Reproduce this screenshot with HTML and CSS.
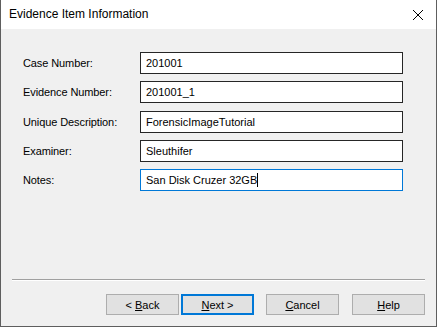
FILE: index.html
```html
<!DOCTYPE html>
<html lang="en">
<head>
    <meta charset="UTF-8">
    <title>Evidence Item Information</title>
    <link rel="stylesheet" href="styles.css">
</head>
<body>
    <div class="dialog">
        <div class="titlebar">
            <span class="title">Evidence Item Information</span>
            <svg class="close" width="12" height="12" viewBox="0 0 12 12">
                <path d="M1 1 L11 11 M11 1 L1 11" stroke="#000" stroke-width="1" fill="none"/>
            </svg>
        </div>

        <div class="form">
            <label>Case Number:</label>
            <div class="field">201001</div>
            <label>Evidence Number:</label>
            <div class="field">201001_1</div>
            <label>Unique Description:</label>
            <div class="field">ForensicImageTutorial</div>
            <label>Examiner:</label>
            <div class="field">Sleuthifer</div>
            <label>Notes:</label>
            <div class="field focused">San Disk Cruzer 32GB<span class="caret"></span></div>
        </div>

        <div class="separator"></div>

        <div class="buttons">
            <button class="btn">&lt; <u>B</u>ack</button>
            <button class="btn default"><u>N</u>ext &gt;</button>
            <button class="btn cancel"><u>C</u>ancel</button>
            <button class="btn help"><u>H</u>elp</button>
        </div>
    </div>
</body>
</html>
```

FILE: styles.css
```css
body {
    margin: 0;
    background: #fff;
    font-family: "Liberation Sans", Arial, sans-serif;
    font-size: 11px;
    color: #000;
}
.dialog {
    width: 435px;
    height: 326px;
    border: 1px solid #5e5e5e;
    border-top: none;
    background: #f0f0f0;
    display: flex;
    flex-direction: column;
}
.titlebar {
    height: 29px;
    background: #fff;
    display: flex;
    align-items: center;
    justify-content: space-between;
    padding: 0 12px 0 8px;
    flex-shrink: 0;
}
.title {
    font-size: 12px;
    color: #000;
    margin-top: -1px;
}
.close {
    display: block;
}
.form {
    flex: 1;
    display: grid;
    grid-template-columns: 117px 263px;
    grid-auto-rows: 22px;
    row-gap: 7.25px;
    padding: 23px 0 0 22px;
    align-items: center;
}
.form label {
    letter-spacing: -0.1px;
}
.field {
    height: 20px;
    line-height: 20px;
    border: 1px solid #262626;
    background: #fff;
    padding-left: 5px;
    white-space: nowrap;
}
.field.focused {
    border-color: #0078d7;
}
.caret {
    display: inline-block;
    width: 1px;
    height: 14px;
    background: #000;
    vertical-align: -3px;
}
.separator {
    margin: 0 11px;
    border-top: 1px solid #a0a0a0;
    border-bottom: 1px solid #fff;
}
.buttons {
    display: flex;
    padding: 13px 0 11px 105px;
}
.btn {
    width: 73px;
    height: 21px;
    margin: 0;
    padding: 0;
    background: #e1e1e1;
    border: 1px solid #adadad;
    font-family: "Liberation Sans", Arial, sans-serif;
    font-size: 11px;
    color: #000;
}
.btn.default {
    margin-left: 2px;
    border: 2px solid #0078d7;
}
.btn.cancel {
    margin-left: 12px;
}
.btn.help {
    margin-left: 13px;
}
```
